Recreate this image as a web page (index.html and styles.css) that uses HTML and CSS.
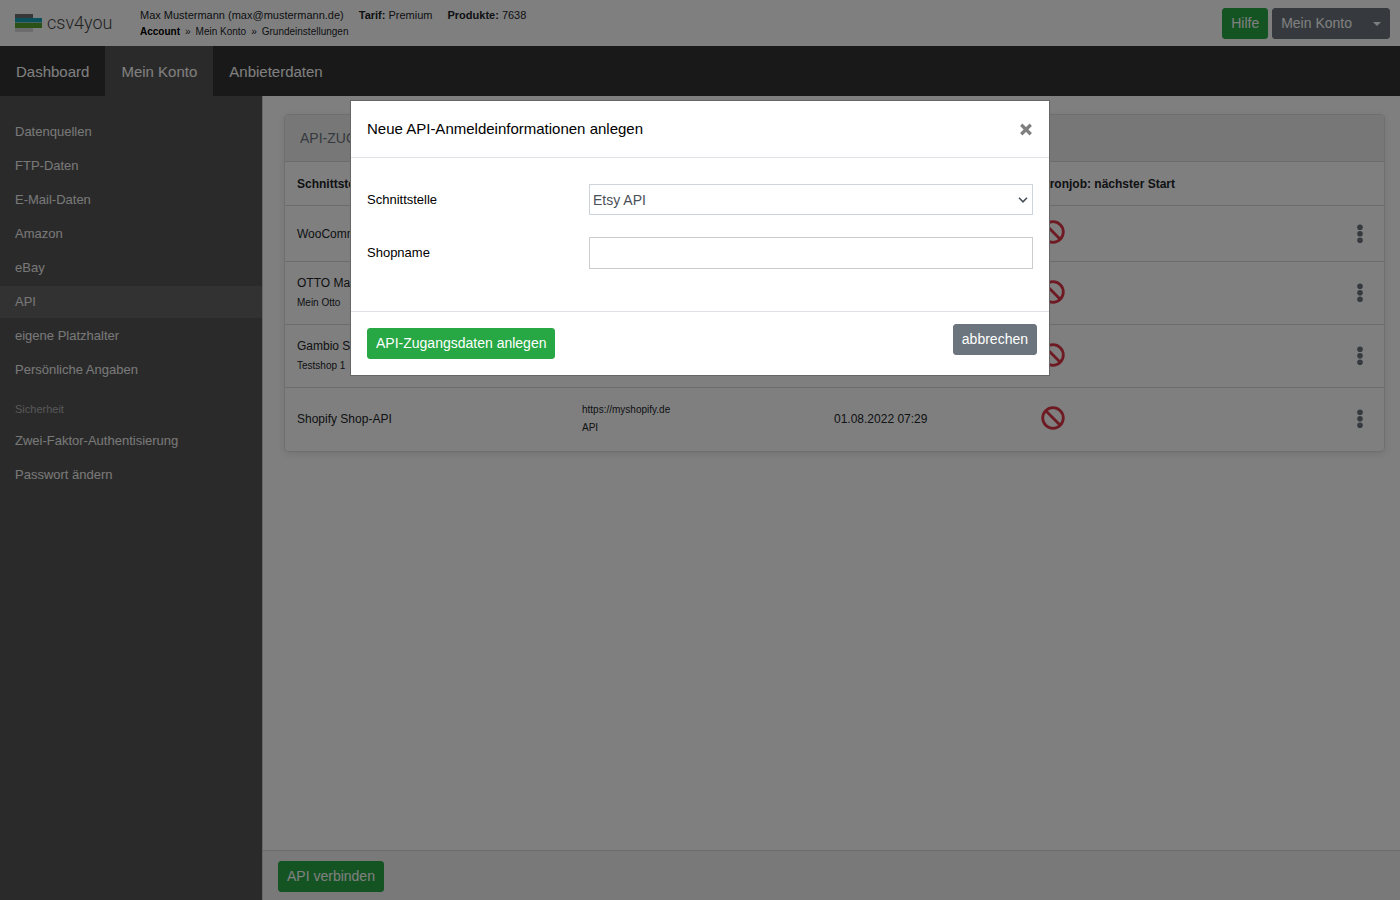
FILE: index.html
```html
<!DOCTYPE html>
<html lang="de">
<head>
<meta charset="utf-8">
<meta name="viewport" content="width=device-width, initial-scale=1">
<title>csv4you – API</title>
<link rel="stylesheet" href="styles.css">
</head>
<body>
<svg class="sprite" aria-hidden="true">
  <symbol id="ban" viewBox="0 0 24 24">
    <circle cx="12" cy="12" r="10.3" fill="none" stroke="currentColor" stroke-width="2.8"/>
    <path d="M4.8 4.8 19.2 19.2" stroke="currentColor" stroke-width="2.8"/>
  </symbol>
  <symbol id="dots" viewBox="0 0 6 20">
    <circle cx="3" cy="3.3" r="2.8" fill="currentColor"/>
    <circle cx="3" cy="9.8" r="2.8" fill="currentColor"/>
    <circle cx="3" cy="16.3" r="2.8" fill="currentColor"/>
  </symbol>
</svg>
<div class="app">
  <header class="topbar">
    <a class="logo" href="#">
      <svg class="logo-mark" viewBox="0 0 27 18" aria-hidden="true">
        <rect width="18" height="4" fill="#6e6e6e"/>
        <rect y="14" width="18" height="4" fill="#d8d8d8"/>
        <rect y="4" width="27" height="5" fill="#14a3b8"/>
        <rect y="9" width="27" height="5" fill="#55a52f"/>
        <rect y="8" width="27" height="1" fill="#8fc9c0"/>
      </svg>
      <span class="logo-text">csv4you</span>
    </a>
    <div class="account">
      <div class="account-line">
        <span>Max Mustermann (max@mustermann.de)</span>
        <span><b>Tarif:</b> Premium</span>
        <span><b>Produkte:</b> 7638</span>
      </div>
      <nav class="crumbs" aria-label="Pfad">
        <b>Account</b><span>»</span><a href="#">Mein Konto</a><span>»</span><a href="#">Grundeinstellungen</a>
      </nav>
    </div>
    <div class="top-actions">
      <button class="btn btn-green" type="button">Hilfe</button>
      <button class="btn btn-gray btn-menu" type="button">Mein Konto<span class="caret"></span></button>
    </div>
  </header>
  <nav class="mainnav" aria-label="Hauptnavigation">
    <a href="#">Dashboard</a>
    <a class="active" href="#">Mein Konto</a>
    <a href="#">Anbieterdaten</a>
  </nav>
  <div class="columns">
    <nav class="sidebar" aria-label="Konto">
      <a href="#">Datenquellen</a>
      <a href="#">FTP-Daten</a>
      <a href="#">E-Mail-Daten</a>
      <a href="#">Amazon</a>
      <a href="#">eBay</a>
      <a class="active" href="#">API</a>
      <a href="#">eigene Platzhalter</a>
      <a href="#">Persönliche Angaben</a>
      <div class="side-title">Sicherheit</div>
      <a href="#">Zwei-Faktor-Authentisierung</a>
      <a href="#">Passwort ändern</a>
    </nav>
    <div class="content">
      <main class="main">
        <section class="card">
          <h1 class="card-title">API-ZUGANGSDATEN</h1>
          <table class="table">
            <colgroup><col class="c-name"><col class="c-data"><col class="c-date"><col class="c-cron"><col class="c-menu"></colgroup>
            <thead>
              <tr><th>Schnittstelle</th><th>Daten</th><th>Erstellt</th><th>Cronjob: nächster Start</th><th></th></tr>
            </thead>
            <tbody>
              <tr class="single">
                <td>WooCommerce</td><td></td><td></td>
                <td><svg class="ban"><use href="#ban"/></svg></td>
                <td class="menu"><button class="dots" type="button" aria-label="Aktionen"><svg><use href="#dots"/></svg></button></td>
              </tr>
              <tr>
                <td>OTTO Market<small>Mein Otto</small></td><td></td><td></td>
                <td><svg class="ban"><use href="#ban"/></svg></td>
                <td class="menu"><button class="dots" type="button" aria-label="Aktionen"><svg><use href="#dots"/></svg></button></td>
              </tr>
              <tr>
                <td>Gambio Shop<small>Testshop 1</small></td><td></td><td></td>
                <td><svg class="ban"><use href="#ban"/></svg></td>
                <td class="menu"><button class="dots" type="button" aria-label="Aktionen"><svg><use href="#dots"/></svg></button></td>
              </tr>
              <tr>
                <td>Shopify Shop-API</td><td class="lines"><small>https://myshopify.de</small><small>API</small></td><td>01.08.2022 07:29</td>
                <td><svg class="ban"><use href="#ban"/></svg></td>
                <td class="menu"><button class="dots" type="button" aria-label="Aktionen"><svg><use href="#dots"/></svg></button></td>
              </tr>
            </tbody>
          </table>
        </section>
      </main>
      <footer class="bottombar">
        <button class="btn btn-green" type="button">API verbinden</button>
      </footer>
    </div>
  </div>
</div>
<div class="overlay">
  <form class="modal" role="dialog" aria-modal="true" aria-labelledby="modal-title">
    <div class="modal-head">
      <h2 id="modal-title">Neue API-Anmeldeinformationen anlegen</h2>
      <button class="close" type="button" aria-label="Schließen">
        <svg viewBox="0 0 12 12"><path d="M1.6 1.6 10.4 10.4M10.4 1.6 1.6 10.4" stroke="currentColor" stroke-width="3"/></svg>
      </button>
    </div>
    <div class="modal-body">
      <div class="field">
        <label for="api">Schnittstelle</label>
        <div class="select-wrap">
          <select id="api"><option>Etsy API</option></select>
          <svg class="chevron" viewBox="0 0 10 6" aria-hidden="true"><path d="M1 .8 5 4.8 9 .8" fill="none" stroke="currentColor" stroke-width="1.6"/></svg>
        </div>
      </div>
      <div class="field">
        <label for="shop">Shopname</label>
        <input id="shop" type="text">
      </div>
    </div>
    <div class="modal-foot">
      <button class="btn btn-green" type="submit">API-Zugangsdaten anlegen</button>
      <button class="btn btn-gray cancel" type="button">abbrechen</button>
    </div>
  </form>
</div>
</body>
</html>
```

FILE: styles.css
```css
* { box-sizing: border-box; }

body {
  margin: 0;
  font: 13px/20px "Liberation Sans", Arial, sans-serif;
  color: #212529;
  background: #fff;
}

a { color: inherit; text-decoration: none; }

.sprite { position: absolute; width: 0; height: 0; }

.app { display: flex; flex-direction: column; min-height: 100vh; }

.btn {
  font: 14px/21px "Liberation Sans", Arial, sans-serif;
  padding: 4px 8px;
  border: 1px solid transparent;
  border-radius: 3px;
  color: #fff;
  cursor: pointer;
}
.btn-green { background: #28a745; border-color: #28a745; }
.btn-gray { background: #6c757d; border-color: #6c757d; }

/* top bar */
.topbar { display: flex; align-items: flex-start; height: 46px; padding: 8px 10px 0 15px; }
.logo { display: flex; align-items: center; gap: 5px; width: 125px; height: 30px; }
.logo-mark { width: 27px; height: 18px; }
.logo-text { font: 300 18px/24px Roboto, sans-serif; color: #444; }
.account { flex: 1; font-size: 11px; line-height: 16px; }
.account-line { display: flex; gap: 15px; line-height: 15px; }
.crumbs { display: flex; gap: 5px; font-size: 10px; line-height: 17px; }
.crumbs b { color: #000; }
.top-actions { display: flex; gap: 4px; }
.btn-menu { display: flex; align-items: center; gap: 21px; }
.caret { border: 4px solid transparent; border-top-color: #fff; border-bottom: 0; }

/* main navigation */
.mainnav { display: flex; height: 50px; background: #333; }
.mainnav a { padding: 0 16px; font-size: 15px; line-height: 52px; color: #fff; }
.mainnav .active { background: #545454; }

.columns { flex: 1; display: flex; }

/* sidebar */
.sidebar {
  flex: 0 0 263px;
  display: flex;
  flex-direction: column;
  gap: 2px;
  padding-top: 20px;
  background: #545454;
  border-right: 1px solid #d0d0d0;
  color: #f0f0f0;
}
.sidebar a { padding: 0 15px; line-height: 32px; }
.sidebar .active { background: #646464; }
.side-title { padding: 7px 15px 0; font-size: 11px; line-height: 28px; color: #b0b0b0; }

/* content */
.content { flex: 1; min-width: 0; display: flex; flex-direction: column; }
.main { flex: 1; padding: 18px 15px 18px 21px; }
.card {
  border: 1px solid #dfdfdf;
  border-radius: 4px;
  box-shadow: 0 2px 8px rgba(0, 0, 0, .1);
}
.card-title {
  margin: 0;
  padding: 13px 15px;
  font-size: 14px;
  font-weight: 400;
  line-height: 20px;
  color: #6c757d;
  background: #efefef;
}
.table { width: 100%; border-collapse: collapse; table-layout: fixed; font-size: 12px; }
.c-name { width: 285px; }
.c-data { width: 252px; }
.c-date { width: 207px; }
.c-menu { width: 50px; }
.table th { height: 44px; padding: 0 12px; text-align: left; border-top: 1px solid #d8d8d8; }
.table td { height: 63px; padding: 0 12px; border-top: 1px solid #d8d8d8; }
.table .single td { height: 56px; }
.table small { display: block; font-size: 10px; line-height: 20px; }
.table .lines small { line-height: 18px; }
.ban { display: block; width: 24px; height: 24px; margin-bottom: 3px; color: #dc3545; }
.table .menu { padding-right: 20px; }
.dots { display: block; margin-left: auto; width: 8px; padding: 0 1px; border: 0; background: none; color: #6c757d; }
.dots svg { display: block; width: 6px; height: 20px; }

.bottombar { padding: 10px 15px 8px; background: #f2f2f2; border-top: 1px solid #d8d8d8; }

/* modal */
.overlay {
  position: fixed;
  inset: 0;
  display: flex;
  justify-content: center;
  align-items: flex-start;
  padding: 100px 16px 16px;
  background: rgba(0, 0, 0, .5);
}
.modal { width: 100%; max-width: 700px; background: #fff; border: 1px solid #666; color: #000; }
.modal-head {
  display: flex;
  justify-content: space-between;
  align-items: center;
  padding: 16px;
  border-bottom: 1px solid #dee2e6;
}
.modal-head h2 { margin: 0; font-size: 15px; font-weight: 400; line-height: 24px; }
.close { padding: 0; border: 0; background: none; color: #7f7f7f; }
.close svg { display: block; width: 14px; height: 13px; }
.modal-body { display: flex; flex-direction: column; gap: 22px; padding: 26px 16px 42px; }
.field { display: grid; grid-template-columns: 1fr 2fr; align-items: center; }
.select-wrap { position: relative; }
.field select,
.field input {
  display: block;
  width: 100%;
  height: 32px;
  padding: 0 3px;
  border: 1px solid #ccc;
  border-radius: 0;
  background: #fff;
  font: 14px "Liberation Sans", Arial, sans-serif;
  color: #495057;
}
.field select { appearance: none; height: 31px; border-color: #ced4da; }
.chevron { position: absolute; right: 5px; top: 13px; width: 10px; height: 6px; color: #495057; pointer-events: none; }
.modal-foot {
  display: flex;
  justify-content: space-between;
  align-items: flex-start;
  padding: 12px 12px 16px 16px;
  border-top: 1px solid #dee2e6;
}
.modal-foot .btn-green { margin-top: 4px; }
```
